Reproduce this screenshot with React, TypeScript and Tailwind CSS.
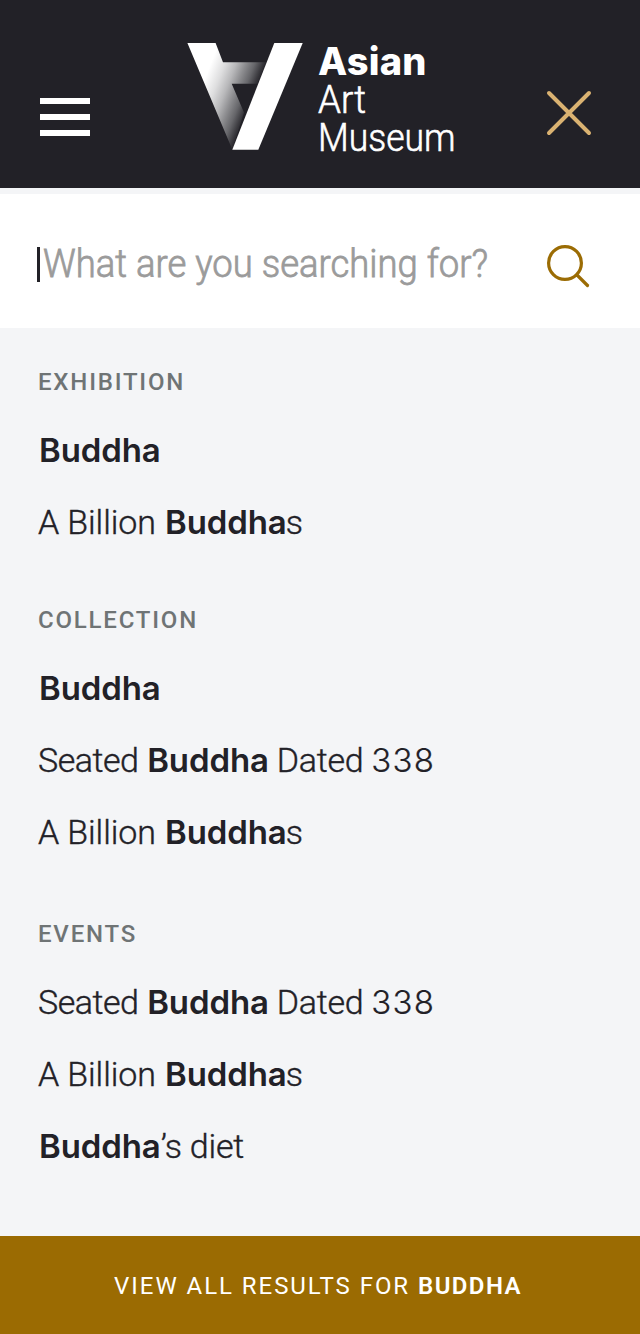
type Part = { text: string; strong?: boolean; className: string };

const BUDDHA: Part = { text: 'Buddha', strong: true, className: 'tracking-[-0.1px]' };
const buddha: Part[] = [BUDDHA];
const billion: Part[] = [
  { text: 'A Billion ', className: 'tracking-[-0.1px]' },
  BUDDHA,
  { text: 's', className: '-ml-px tracking-[0px]' },
];
const seated: Part[] = [
  { text: 'Seated ', className: 'tracking-[-0.5px]' },
  BUDDHA,
  { text: ' Dated ', className: 'tracking-[-0.3px]' },
  { text: '338', className: "font-['Inter',sans-serif] text-[33px] tracking-[1.2px] [-webkit-text-stroke:0.2px]" },
];
const diet: Part[] = [BUDDHA, { text: '’s diet', className: 'tracking-[-0.2px]' }];

const sections = [
  { title: 'EXHIBITION', rows: [buddha, billion], className: 'mt-[34px]' },
  { title: 'COLLECTION', rows: [buddha, seated, billion], className: 'mt-[42px]' },
  { title: 'EVENTS', rows: [seated, billion, diet], className: 'mt-[46px]' },
];

function LogoMark() {
  return (
    <svg width="120" height="112" viewBox="5 0 120 112" className="block shrink-0">
      <defs>
        <linearGradient id="fade" gradientUnits="userSpaceOnUse" x1="34" y1="13.4" x2="83" y2="32.7">
          <stop offset="0" stopColor="#fff" />
          <stop offset="0.25" stopColor="#dededf" />
          <stop offset="0.45" stopColor="#b8b8ba" />
          <stop offset="0.62" stopColor="#8c8c8f" />
          <stop offset="0.78" stopColor="#66666a" />
          <stop offset="0.92" stopColor="#38373c" />
          <stop offset="1" stopColor="#222127" />
        </linearGradient>
      </defs>
      <path d="M7.4 1H35.6L43 20.3H86L77.5 41.7H51.7L64 70.5L52.3 107.5Z" fill="url(#fade)" />
      <path d="M94.3 1H122.7L78.3 107.7H52.3Z" fill="#fff" />
    </svg>
  );
}

export default function App() {
  return (
    <div className="flex h-[1334px] w-[640px] flex-col overflow-hidden bg-[#f4f5f7] font-['Roboto','Liberation_Sans',sans-serif] text-[#222127]">
      <header className="flex h-[188px] shrink-0 items-start bg-[#222127] pl-10 text-white">
        <button aria-label="Menu" className="mt-[98px] flex w-[50px] flex-col gap-[10px]">
          <span className="h-[6px] w-full bg-white" />
          <span className="h-[6px] w-full bg-white" />
          <span className="h-[6px] w-full bg-white" />
        </button>
        <div className="mt-[42px] ml-[95px] flex">
          <LogoMark />
          <div className="ml-[13px] flex w-[147px] flex-col text-[39px] leading-[38.5px] font-light whitespace-nowrap">
            <span className="font-['Inter',sans-serif] text-[38px] font-extrabold tracking-[0.2px]">Asian</span>
            <span className="origin-left scale-x-[0.94] [-webkit-text-stroke:0.6px]">Art</span>
            <span className="origin-left scale-x-[0.91] [-webkit-text-stroke:0.6px]">Museum</span>
          </div>
        </div>
        <svg width="48" height="48" viewBox="0 0 48 48" className="mt-[89px] ml-[80px] block shrink-0">
          <path d="M4 4L44 44M44 4L4 44" stroke="#dab271" strokeWidth="4" strokeLinecap="round" />
        </svg>
      </header>

      <div className="mt-[6px] flex h-[134px] shrink-0 items-start bg-white pl-[37px]">
        <span className="mt-[53px] h-[35px] w-[3px] bg-[#222127]" />
        <span className="mt-[48px] ml-[3px] w-[500px] origin-left scale-x-[0.96] text-[38px] leading-[44px] font-light whitespace-nowrap text-[#9b9b9b] [-webkit-text-stroke:0.8px]">
          What are you searching for?
        </span>
        <svg width="46" height="46" viewBox="0 0 46 46" fill="none" className="mt-[49px] ml-[2px] block shrink-0" stroke="#9b6c04" strokeWidth="3.2" strokeLinecap="round">
          <circle cx="20" cy="20" r="16.4" />
          <path d="M32 32L42.5 42.5" />
        </svg>
      </div>

      <main className="flex flex-1 flex-col pl-[38px]">
        {sections.map((s) => (
          <section key={s.title} className={s.className}>
            <h2 className="mb-3 h-10 text-[24px] leading-10 font-medium tracking-[1.8px] text-[#6f7475]">{s.title}</h2>
            <ul>
              {s.rows.map((row, i) => (
                <li key={i} className="flex h-[72px] items-baseline text-[34px] leading-[72px] font-light whitespace-pre">
                  {row.map((p) =>
                    p.strong ? (
                      <strong key={p.text} className="ml-px font-['Inter',sans-serif] text-[33px] font-semibold">
                        <span className={p.className}>{p.text}</span>
                      </strong>
                    ) : (
                      <span key={p.text} className="[-webkit-text-stroke:0.4px]">
                        <span className={p.className}>{p.text}</span>
                      </span>
                    ),
                  )}
                </li>
              ))}
            </ul>
          </section>
        ))}
      </main>

      <button className="flex h-[98px] shrink-0 items-center justify-center bg-[#9b6b02] pt-[2px] pr-[4px] text-[24px] leading-10 tracking-[1.95px] whitespace-pre text-white">
        <span>VIEW ALL RESULTS FOR </span>
        <span className="font-semibold tracking-[1.4px]">BUDDHA</span>
      </button>
    </div>
  );
}
